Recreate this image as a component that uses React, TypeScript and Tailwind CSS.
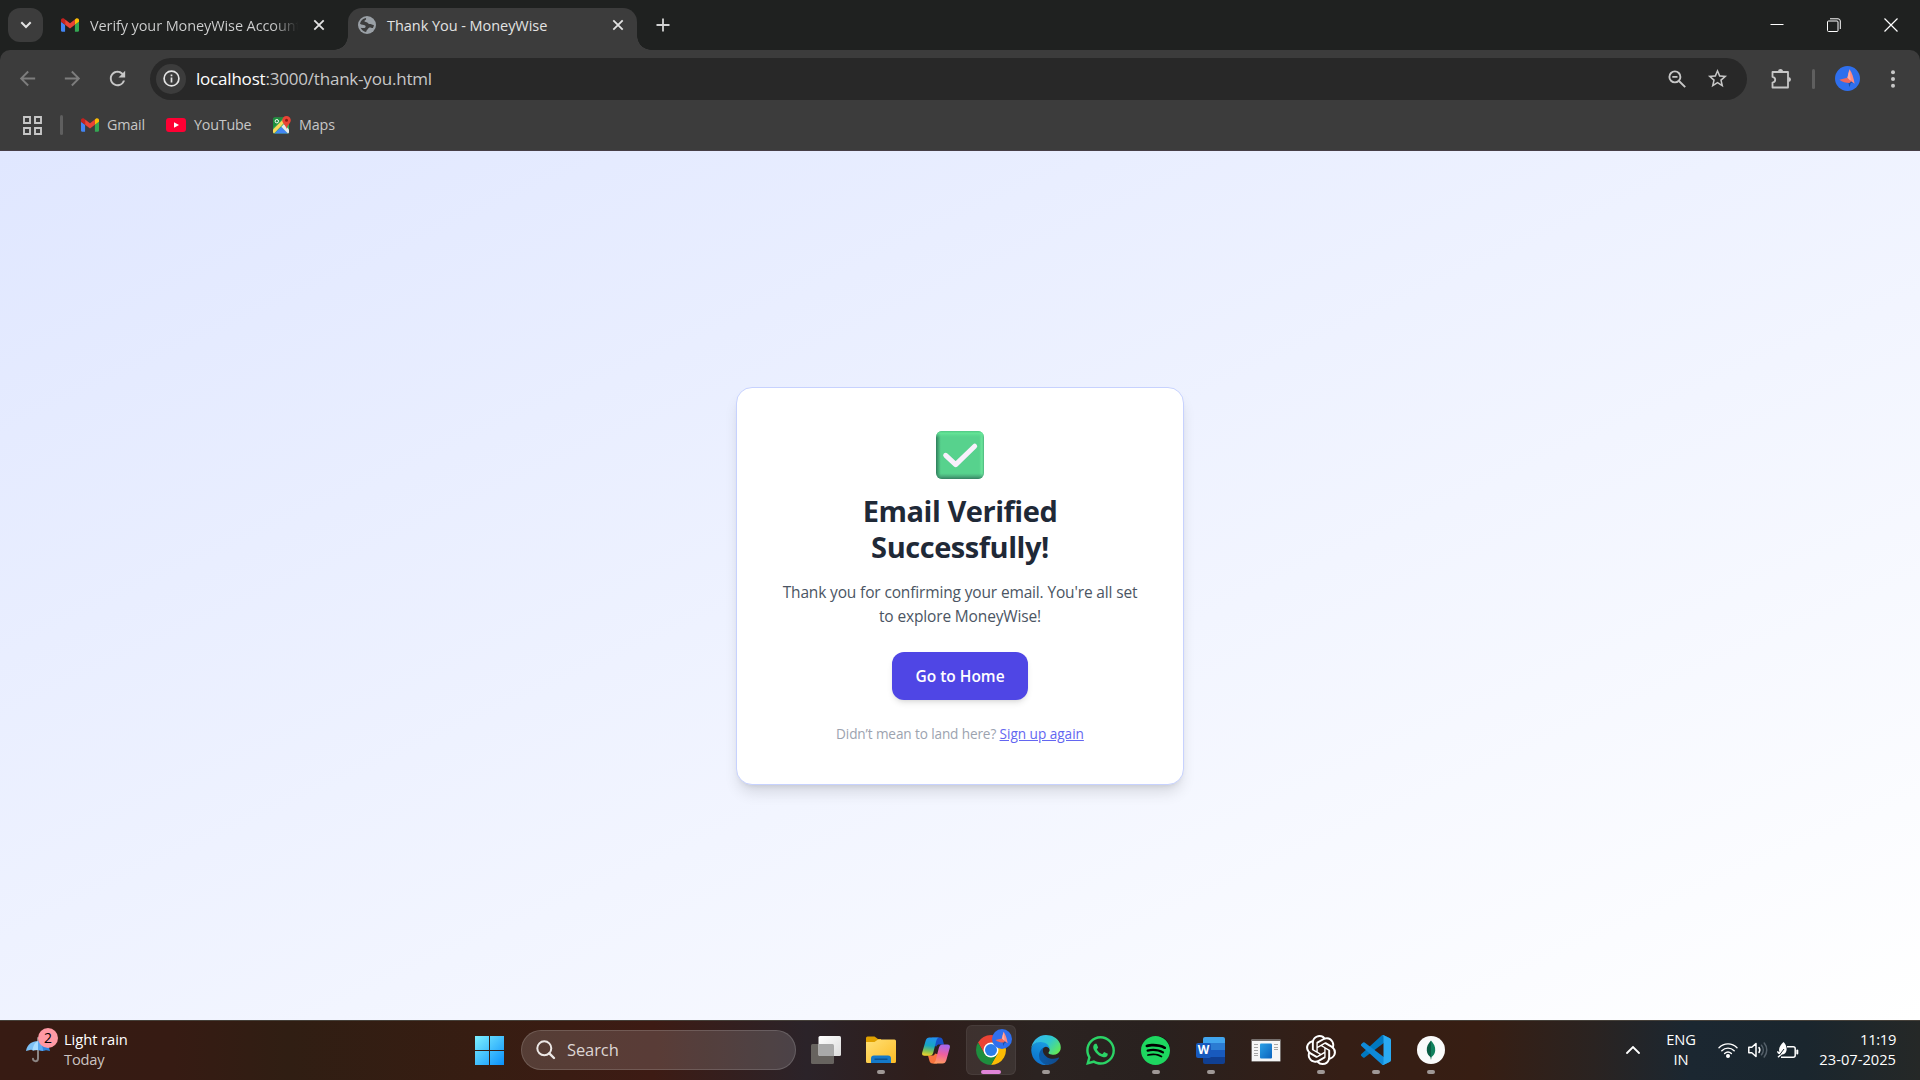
import type { ReactNode } from "react";
import { MdArrowBack, MdArrowForward, MdRefresh, MdStarBorder } from "react-icons/md";
import { SiOpenai, SiSpotify } from "react-icons/si";
import { FaWhatsapp } from "react-icons/fa";

function GmailIcon() {
  return (
    <svg viewBox="52 42 88 66" className="h-[14px] w-[18px] shrink-0">
      <path fill="#4285f4" d="M58 108h14V74L52 59v43c0 3.32 2.69 6 6 6" />
      <path fill="#34a853" d="M120 108h14c3.32 0 6-2.69 6-6V59l-20 15" />
      <path fill="#fbbc04" d="M120 48v26l20-15v-8c0-7.42-8.47-11.65-14.4-7.2" />
      <path fill="#ea4335" d="M72 74V48l24 18 24-18v26L96 92" />
      <path fill="#c5221f" d="M52 51v8l20 15V48l-5.6-4.2c-5.94-4.45-14.4-.22-14.4 7.2" />
    </svg>
  );
}

function GlobeIcon() {
  return (
    <svg viewBox="0 0 18 18" className="size-[18px] shrink-0">
      <circle cx="9" cy="9" r="9" fill="#9aa0a6" />
      <path
        fill="#3c3c3c"
        d="M2 7.8C2.5 5 4.8 2.7 7.7 2.1c.8.7.4 1.7-.5 2.2-.9.4-.9 1.2-.2 1.5 1.2.5 2.2.3 2.8 1.3.6 1 1.7 1 2.7 1 1.2 0 1.6 1 3.4.8-.1 1.2-.5 2.3-1 3.2-1.6.1-2.1-.9-3.4-.6-1.3.4-1.3 1.6-2.3 2.2-.7.5-.6 1.500-1.200 2.200A7 7 0 0 1 2.600 11.700c1.400.3 2.700.6 4 .2 1.200-.4 1.400-1.700.5-2.400C5.700 8.400 3.700 9.200 2 7.800Z"
      />
    </svg>
  );
}

function CloseIcon() {
  return (
    <svg viewBox="0 0 12 12" className="size-3 shrink-0" stroke="#e3e3e3" strokeWidth="1.8">
      <path d="M1.3 1.3l9.400 9.400M10.700 1.300L1.300 10.700" />
    </svg>
  );
}

function Bird({ className }: { className: string }) {
  return (
    <svg viewBox="0 0 26 26" className={className}>
      <circle cx="13" cy="13" r="13" fill="#2f6fed" />
      <path fill="#174ea6" d="M6 15l8 2.500 1 4.500 1.500-4.500 2.500.5-4-4z" />
      <path fill="#ff8a80" d="M15.200 3.500c2.600 4 4 8.600 5.200 15l-5.600-4.100-1.700-2.200c.4-3 1-6 2.100-8.700z" />
      <path fill="#ee675c" d="M4.500 14.200l8.400-2 4.400 3.400-2.200 2c-3.400.1-7.400-1.100-10.600-3.400z" />
      <path fill="#ffab9f" d="M15.200 3.500l-2.300 8.800 3.400 3.200z" />
    </svg>
  );
}

function TabStrip() {
  return (
    <div className="flex h-[50px] shrink-0 items-center bg-[#1f2120] text-[14.5px]">
      <div className="ml-2 flex h-[34px] w-[35px] shrink-0 items-center justify-center rounded-xl bg-[#3c3c3c]">
        <svg viewBox="0 0 12 8" className="h-2 w-3" fill="none" stroke="#e3e3e3" strokeWidth="2">
          <path d="M1.300 1.300L6 6l4.700-4.700" />
        </svg>
      </div>
      <div className="ml-[18px] flex w-[264px] shrink-0 items-center">
        <GmailIcon />
        <span className="ml-[11px] w-[211px] overflow-hidden whitespace-nowrap bg-gradient-to-r from-[#d0d1d1] from-88% to-transparent bg-clip-text pt-px tracking-[-0.1px] text-transparent">
          Verify your MoneyWise Account
        </span>
        <span className="ml-[15px]">
          <CloseIcon />
        </span>
      </div>
      <div className="relative ml-[23px] mt-2 flex h-[42px] w-[289px] shrink-0 items-center self-start rounded-t-[14px] bg-[#3c3c3c] pb-2">
        <div className="absolute -left-[14px] bottom-0 size-[14px] bg-[radial-gradient(circle_at_0_0,transparent_13.5px,#3c3c3c_14px)]" />
        <div className="absolute -right-[14px] bottom-0 size-[14px] bg-[radial-gradient(circle_at_100%_0,transparent_13.5px,#3c3c3c_14px)]" />
        <span className="ml-[10px]">
          <GlobeIcon />
        </span>
        <span className="ml-[11px] w-[225px] whitespace-nowrap pt-px tracking-[-0.05px] text-[#e3e3e3]">Thank You - MoneyWise</span>
        <span>
          <CloseIcon />
        </span>
      </div>
      <svg viewBox="0 0 14 14" className="ml-[19px] size-[14px]" stroke="#d2d3d3" strokeWidth="1.8">
        <path d="M7 .5v13M.5 7h13" />
      </svg>
      <div className="ml-auto mr-[22px] flex items-center gap-[43px] pb-px">
        <svg viewBox="0 0 14 14" className="size-[14px]" stroke="#fff">
          <path d="M.5 6.500h13" />
        </svg>
        <svg viewBox="0 0 14 14" className="size-[14px]" fill="none" stroke="#fff">
          <rect x=".5" y="3" width="10.500" height="10.500" rx="1" />
          <path d="M3 .8h8A2.300 2.300 0 0 1 13.300 3v8" />
        </svg>
        <svg viewBox="0 0 14 14" className="size-[14px]" stroke="#fff" strokeWidth="1.2">
          <path d="M.5.5l13 13M13.500.5l-13 13" />
        </svg>
      </div>
    </div>
  );
}

function Toolbar() {
  return (
    <div className="bg-[#1f2120]">
      <div className="flex h-[57px] items-center rounded-t-[10px] bg-[#3c3c3c]">
        <MdArrowBack className="ml-4 size-[23px] shrink-0 text-[#7d7d7d]" />
        <MdArrowForward className="ml-[22px] size-[23px] shrink-0 text-[#7d7d7d]" />
        <MdRefresh className="ml-[22px] size-[23px] shrink-0 text-[#c7c7c7]" />
        <div className="ml-[21px] flex h-[42px] w-[1597px] shrink-0 items-center rounded-full bg-[#282828]">
          <div className="ml-[6px] flex size-[30px] shrink-0 items-center justify-center rounded-full bg-[#3c3c3c]">
            <svg viewBox="0 0 17 17" className="size-[17px]" fill="none" stroke="#e3e3e3" strokeWidth="1.7">
              <circle cx="8.500" cy="8.500" r="7.400" />
              <path d="M8.500 7.500v5M8.500 4.500v1.800" />
            </svg>
          </div>
          <span className="ml-[10px] whitespace-nowrap pt-px text-[17px] tracking-[-0.2px] text-[#c7c7c7]">
            <span className="text-white">localhost</span>:3000/thank-you.html
          </span>
          <svg viewBox="0 0 18 18" className="ml-auto size-[18px]" fill="none" stroke="#c7c7c7" strokeWidth="1.9">
            <circle cx="6.900" cy="6.900" r="5.500" />
            <path d="M11 11l6.200 6.200M4.300 6.900h5.200" />
          </svg>
          <MdStarBorder className="ml-5 mr-[18px] size-[23px] text-[#c7c7c7]" />
        </div>
        <svg viewBox="0 0 22 22" className="ml-[23px] size-[22px]" fill="none" stroke="#c7c7c7" strokeWidth="1.8" strokeLinejoin="round">
          <path d="M3 4h15v15.500H2.500V14.600c3.600-.5 3.600-5.200 0-5.700V4Z" />
          <path fill="#c7c7c7" stroke="none" d="M8 3.500a2.500 2.500 0 0 1 5 0ZM18.500 9a2.500 2.500 0 0 1 0 5Z" />
        </svg>
        <div className="ml-5 h-5 w-[3px] rounded-full bg-[#5f5f5f]" />
        <Bird className="ml-5 size-[25px]" />
        <svg viewBox="0 0 4 18" className="ml-[31px] h-[18px] w-1" fill="#c7c7c7">
          <circle cx="2" cy="2.200" r="2" />
          <circle cx="2" cy="9" r="2" />
          <circle cx="2" cy="15.800" r="2" />
        </svg>
      </div>
      <div className="flex h-[44px] items-center border-b border-[#463e46] bg-[#3c3c3c] pb-[7px] text-[14.3px] text-[#c7c7c7]">
        <svg viewBox="0 0 19 19" className="ml-[23px] size-[19px]" fill="none" stroke="#c7c7c7" strokeWidth="1.9">
          <path d="M1 1h6v6H1zM12 1h6v6h-6zM1 12h6v6H1zM12 12h6v6h-6z" />
        </svg>
        <div className="ml-[18px] h-5 w-[3px] rounded-full bg-[#5f5f5f]" />
        <span className="ml-[18px] flex w-[85px] items-center gap-2 tracking-[-0.2px]">
          <GmailIcon />
          Gmail
        </span>
        <span className="flex w-[107px] items-center gap-2 tracking-[-0.2px]">
          <svg viewBox="0 0 20 14" className="h-[14px] w-5">
            <rect width="20" height="14" rx="3" fill="#f03" />
            <path fill="#fff" d="M8 4.200v5.600L13 7z" />
          </svg>
          YouTube
        </span>
        <span className="flex items-center gap-2 tracking-[-0.1px]">
          <svg viewBox="0 0 18 18" className="size-[18px] overflow-visible">
            <rect x="0" y="1.500" width="16" height="16" rx="1.500" fill="#34a853" />
            <path fill="#1e8e3e" d="M0 3a1.500 1.500 0 0 1 1.500-1.500H11L0 12z" />
            <path fill="#4285f4" d="M1.500 17.500L8.300 10.800l6.700 6.700z" />
            <path fill="#fbd75b" d="M0 13.500L10.500 3v4.500L1 17.400a1.500 1.500 0 0 1-1-1.400z" />
            <path fill="#e8eaed" d="M8.300 10.800L11 8l5 5.500v2.700a1.500 1.500 0 0 1-1 1.300z" />
            <circle cx="3.800" cy="5.200" r="1.700" fill="none" stroke="#fff" />
            <path fill="#ea4335" d="M13.500 0a4.300 4.300 0 0 1 4.300 4.300c0 3.200-3.600 4.500-4.300 8.700-.7-4.200-4.300-5.500-4.300-8.700A4.300 4.300 0 0 1 13.500 0z" />
            <circle cx="13.500" cy="4.300" r="1.500" fill="#8c1c13" />
          </svg>
          Maps
        </span>
      </div>
    </div>
  );
}

function ThankYouCard() {
  return (
    <div className="mt-px flex h-[398px] w-[448px] flex-col items-center rounded-2xl border border-[#c7d2fe] bg-white pt-[43px] text-center shadow-[0_10px_15px_-3px_rgba(0,0,0,0.12),0_4px_6px_-4px_rgba(0,0,0,0.12)]">
      <svg viewBox="0 0 48 48" className="size-12 shrink-0">
        <defs>
          <linearGradient id="sideShade" x1="0" x2="1" y1="0" y2="0">
            <stop offset="0" stopColor="#2f7d5b" />
            <stop offset=".1" stopColor="#57d28d" />
            <stop offset=".9" stopColor="#57d28d" />
            <stop offset=".96" stopColor="#6be59b" />
            <stop offset="1" stopColor="#4cb57d" />
          </linearGradient>
          <linearGradient id="endShade" x1="0" x2="0" y1="0" y2="1">
            <stop offset="0" stopColor="#4fc783" />
            <stop offset=".05" stopColor="#66e898" stopOpacity=".8" />
            <stop offset=".15" stopColor="#57d28d" stopOpacity="0" />
            <stop offset=".88" stopColor="#459a75" stopOpacity="0" />
            <stop offset="1" stopColor="#358061" />
          </linearGradient>
        </defs>
        <rect width="48" height="48" rx="6" fill="url(#sideShade)" />
        <rect width="48" height="48" rx="6" fill="url(#endShade)" />
        <path d="M9.700 24.300l10 9.300L38.700 15.200" fill="none" stroke="#f8f0fc" strokeWidth="5" strokeLinecap="round" strokeLinejoin="round" />
      </svg>
      <h1 className="mt-[14px] w-[260px] text-[29px] font-bold leading-[36px] tracking-[-0.45px] text-[#1f2937]">
        Email Verified Successfully!
      </h1>
      <p className="mt-[15px] w-[366px] text-[15.5px] leading-6 tracking-[-0.15px] text-[#4b5563]">
        Thank you for confirming your email. You&apos;re all set to explore MoneyWise!
      </p>
      <button className="mt-6 h-12 w-[136px] shrink-0 rounded-xl bg-[#4f46e5] pt-px text-[15.5px] font-semibold text-white shadow-md">
        Go to Home
      </button>
      <p className="mt-6 whitespace-nowrap text-[13.6px] leading-5 tracking-[-0.12px] text-[#9ca3af]">
        Didn’t mean to land here? <a className="tracking-[-0.02px] text-[#6366f1] underline">Sign up again</a>
      </p>
    </div>
  );
}

function TaskIcon({ children, running = false, active = false }: { children: ReactNode; running?: boolean; active?: boolean }) {
  return (
    <div
      className={
        active
          ? "relative mx-[2.5px] flex size-[50px] shrink-0 items-center justify-center rounded-md border border-white/5 bg-white/8"
          : "relative mx-[2.5px] flex size-[50px] shrink-0 items-center justify-center"
      }
    >
      {children}
      {running && <span className="absolute bottom-px left-[21px] h-1 w-2 rounded-full bg-[#9f9896]" />}
      {active && <span className="absolute bottom-0 left-[14px] h-1 w-5 rounded-full bg-[#e085d8]" />}
    </div>
  );
}

function FolderIcon() {
  return (
    <svg viewBox="0 0 30 28" className="h-7 w-[30px]">
      <defs>
        <linearGradient id="folder" x1="0" x2="1" y1="0" y2="1">
          <stop offset="0" stopColor="#ffe076" />
          <stop offset="1" stopColor="#fcbc25" />
        </linearGradient>
      </defs>
      <path fill="#e0a100" d="M0 2a1.500 1.500 0 0 1 1.500-1.500h7L12 3h3v9H0z" />
      <path fill="url(#folder)" d="M0 6h8.500l3.500-2.500h16.500A1.500 1.500 0 0 1 30 5v20.500a1.500 1.500 0 0 1-1.500 1.500h-27A1.500 1.500 0 0 1 0 25.500z" />
      <path fill="#1479c9" d="M5 27v-4.500A3 3 0 0 1 8 19.500h14a3 3 0 0 1 3 3V27z" />
      <path stroke="#0a4c86" strokeWidth="1.300" d="M8.500 23.200h13" />
    </svg>
  );
}

function CopilotIcon() {
  return (
    <svg viewBox="0 0 28 27" className="h-[27px] w-7">
      <defs>
        <linearGradient id="cpLeft" x1=".5" x2=".35" y1="0" y2="1">
          <stop offset="0" stopColor="#2292ee" />
          <stop offset=".45" stopColor="#18a6c0" />
          <stop offset=".75" stopColor="#80c255" />
          <stop offset="1" stopColor="#f2d22b" />
        </linearGradient>
        <linearGradient id="cpRight" x1=".6" x2=".4" y1="0" y2="1">
          <stop offset="0" stopColor="#a467f0" />
          <stop offset=".5" stopColor="#ef5f9f" />
          <stop offset="1" stopColor="#ff9b61" />
        </linearGradient>
      </defs>
      <path fill="#1750c8" d="M10 .5h8c1.600 0 2.300 1 2.800 2.500L22 7.500h-5c-1.200 0-2 .5-2.500 2L12 9z" />
      <path fill="#f8743e" d="M6 18.500h4.500c1.200 0 2-.6 2.500-2l3.500 1-1.500 9h-4.500c-1.700 0-2.500-1-3-2.500z" />
      <path fill="url(#cpLeft)" d="M7.500.5H17c-1.400.4-2.200 1.500-2.700 3.200L11.300 15.500c-.6 2.300-1.700 3.300-4 3.300H2.500C.5 18.800-.3 17.500.2 15.500L3.700 3.500C4.300 1.500 5.500.5 7.500.5z" />
      <path fill="url(#cpRight)" d="M20.500 7.500h5c2 0 2.800 1.300 2.300 3.300l-3.500 12.400c-.6 2-1.800 3.300-3.800 3.300H11c1.400-.4 2.200-1.500 2.700-3.200l3-11.800c.5-2.300 1.500-4 3.800-4z" />
    </svg>
  );
}

function ChromeIcon() {
  return (
    <svg viewBox="2 2 44 44" className="size-[30px]">
      <path fill="#ea4335" d="M4.950 13A22 22 0 0 1 43.050 13H24L14.470 29.500Z" />
      <path fill="#fbbc04" d="M43.050 13A22 22 0 0 1 24 46L33.530 29.500 24 13Z" />
      <path fill="#1e8e3e" d="M24 46A22 22 0 0 1 4.950 13L14.470 29.500H33.530Z" />
      <circle cx="24" cy="24" r="11" fill="#fff" />
      <circle cx="24" cy="24" r="8.800" fill="#2b7de9" />
    </svg>
  );
}

function EdgeIcon() {
  return (
    <svg viewBox="0 0 256 260" className="size-[30px]">
      <defs>
        <linearGradient id="edgeA" x1=".2" x2="1" y1=".5" y2=".6">
          <stop offset="0" stopColor="#0c59a4" />
          <stop offset="1" stopColor="#114a8b" />
        </linearGradient>
        <linearGradient id="edgeB" x1=".6" x2=".3" y1="0" y2="1">
          <stop offset="0" stopColor="#1b9de2" />
          <stop offset=".6" stopColor="#0f7fd3" />
          <stop offset="1" stopColor="#1070cc" />
        </linearGradient>
        <linearGradient id="edgeC" x1="0" x2="1" y1=".2" y2=".8">
          <stop offset="0" stopColor="#35b5f1" />
          <stop offset=".5" stopColor="#2fc8cf" />
          <stop offset="1" stopColor="#66eb4e" />
        </linearGradient>
      </defs>
      <path fill="url(#edgeA)" d="M235.680 195.460a93.730 93.730 0 0 1-10.540 4.710 101.870 101.870 0 0 1-35.900 6.460c-47.320 0-88.540-32.550-88.540-74.320A31.480 31.480 0 0 1 117.130 105c-42.800 1.800-53.800 46.400-53.800 72.530 0 73.880 68.090 81.370 82.760 81.370 7.910 0 19.840-2.300 27-4.560l1.310-.44a128.340 128.340 0 0 0 66.600-52.800 4 4 0 0 0-5.320-5.640Z" />
      <path fill="url(#edgeB)" d="M105.730 246.600a79.200 79.200 0 0 1-22.740-21.340 80.720 80.720 0 0 1 29.530-120c3.120-1.470 8.450-4.050 15.540-4a32.350 32.350 0 0 1 25.690 13 31.880 31.880 0 0 1 6.360 18.660c0-.21 24.460-79.600-80-79.600-43.900 0-80 41.660-80 78.210a130.150 130.150 0 0 0 12.110 56 128 128 0 0 0 156.380 67.110 75.550 75.550 0 0 1-62.780-8Z" />
      <path fill="url(#edgeC)" d="M152.330 148.860c-.81 1.050-3.300 2.500-3.300 5.660 0 2.610 1.700 5.120 4.720 7.230 14.380 10 41.490 8.680 41.560 8.680a59.560 59.560 0 0 0 30.270-8.350 61.380 61.380 0 0 0 30.430-52.880c.26-22.410-8-37.310-11.340-43.910C223.480 23.840 177.740 0 128 0A128 128 0 0 0 0 126.200c.48-36.540 36.800-66.050 80-66.050 3.500 0 23.460.34 42 10.070 16.340 8.580 24.900 18.940 30.850 29.210 6.180 10.670 7.280 24.150 7.280 29.520 0 5.370-2.740 13.330-7.800 19.910Z" />
    </svg>
  );
}

function WordIcon() {
  return (
    <div className="relative h-[27px] w-[29px]">
      <div className="ml-[7px] flex h-[27px] w-[22px] flex-col overflow-hidden rounded-[2px]">
        <span className="flex-1 bg-[#41a5ee]" />
        <span className="flex-1 bg-[#2b7cd3]" />
        <span className="flex-1 bg-[#185abd]" />
        <span className="flex-1 bg-[#103f91]" />
      </div>
      <span className="absolute left-0 top-[6px] flex size-[15px] items-center justify-center rounded-[2px] bg-[#185abd] text-[12px] font-bold leading-none text-white">
        W
      </span>
    </div>
  );
}

function WindowAppIcon() {
  return (
    <svg viewBox="0 0 30 23" className="h-[23px] w-[30px]">
      <defs>
        <linearGradient id="panel" x1="0" x2="1" y1="0" y2="1">
          <stop offset="0" stopColor="#2aa0e6" />
          <stop offset="1" stopColor="#0c63bd" />
        </linearGradient>
      </defs>
      <rect x=".5" y=".5" width="29" height="22" rx="1" fill="#f6f6f6" stroke="#77716e" />
      <path stroke="#77716e" strokeWidth="1.600" d="M.5 1.200h29" />
      <path stroke="#a6a6a6" d="M3 5.500h4M3 8.500h4M3 11.500h4M3 14.500h4M3 16.500h4M23 5.500h4M23 8.500h4M23 10.500h4" />
      <rect x="9" y="4.500" width="12" height="15" rx="1" fill="url(#panel)" />
    </svg>
  );
}

function VsCodeIcon() {
  return (
    <svg viewBox="0 0 100 100" className="size-[30px]">
      <path fill="#0078c0" d="M96.460 10.800L75.860.88a6.230 6.230 0 0 0-7.110 1.200L1.300 63.580a4.170 4.170 0 0 0 0 6.170l5.510 5a4.170 4.170 0 0 0 5.320.24L93.360 13.400c2.730-2.060 6.640-.12 6.640 3.300v-.24a6.250 6.250 0 0 0-3.540-5.630z" />
      <path fill="#0f8ad8" d="M96.460 89.170l-20.600 9.920a6.230 6.230 0 0 1-7.110-1.210L1.300 36.420a4.170 4.170 0 0 1 0-6.170l5.510-5a4.170 4.170 0 0 1 5.320-.24l81.230 61.600c2.730 2.070 6.640.13 6.640-3.290v.24a6.250 6.250 0 0 1-3.540 5.630z" />
      <path fill="#2aaaf2" d="M75.860 99.130a6.230 6.230 0 0 1-7.110-1.210c2.300 2.300 6.250.67 6.250-2.590V4.670c0-3.260-3.950-4.900-6.250-2.590a6.230 6.230 0 0 1 7.110-1.200l20.600 9.900A6.250 6.250 0 0 1 100 16.400v67.200c0 2.400-1.370 4.600-3.540 5.630z" />
    </svg>
  );
}

function Taskbar() {
  return (
    <div className="flex h-[60px] shrink-0 items-center border-t border-[#454039] bg-[linear-gradient(90deg,#371b13_0%,#361b13_9%,#301e13_15%,#371d12_25%,#3d1b14_34%,#2b2329_42%,#2f1e1b_48%,#2b2321_54%,#29211f_60%,#351e15_70%,#371e13_77%,#2a2321_83%,#1b2731_88%,#1a262e_94%,#252827_100%)] pb-px text-[14.7px] text-white">
      <div className="flex w-[461px] shrink-0 items-center">
        <div className="relative ml-[26px] h-[40px] w-[34px]">
          <svg viewBox="0 0 24 28" className="absolute left-0 top-[6px] h-7 w-6">
            <path fill="none" stroke="#8b8583" strokeWidth="2" strokeLinecap="round" d="M12 2v20.500c0 3.500-5 3.500-5 .3" />
            <path fill="#7cc0f5" d="M0 15C1 8.500 6 5 12 5l-4 9.500-3-.8z" />
            <path fill="#a9dcff" d="M12 5C8.500 6.500 7 10 6.500 14.500L12 14z" />
            <path fill="#2f86e0" d="M12 5c6 0 11 3.500 12 10l-4-.7-3 .7-5-1z" />
            <path fill="#5ba9f0" d="M12 5c3.500 2 5 6 5 10l-5-1z" />
          </svg>
          <span className="absolute left-[12px] -top-[2px] flex size-5 items-center justify-center rounded-full bg-[#ff99a4] text-[14px] leading-none text-black">2</span>
        </div>
        <div className="ml-[4px] pb-[3px] leading-5">
          <div className="tracking-[-0.05px]">Light rain</div>
          <div className="tracking-[-0.2px] text-[#cbc3c1]">Today</div>
        </div>
      </div>
      <svg viewBox="0 0 29 29" className="ml-[14px] size-[29px] shrink-0">
        <defs>
          <linearGradient id="win" gradientUnits="userSpaceOnUse" x1="0" x2="29" y1="0" y2="29">
            <stop offset="0" stopColor="#7df0ff" />
            <stop offset="1" stopColor="#0a90fb" />
          </linearGradient>
        </defs>
        <path fill="url(#win)" d="M0 0h14v14H0zM15 0h14v14H15zM0 15h14v14H0zM15 15h14v14H15z" />
      </svg>
      <div className="ml-[17px] flex h-10 w-[275px] shrink-0 items-center rounded-full border border-white/15 bg-white/15 text-[16.5px] text-[#ddd6d4]">
        <svg viewBox="0 0 20 20" className="ml-[14px] size-5" fill="none" stroke="#ece8e6" strokeWidth="2" strokeLinecap="round">
          <circle cx="8.300" cy="8.300" r="7" />
          <path d="M13.300 13.300l4.700 4.700" strokeWidth="2.4" />
        </svg>
        <span className="ml-[11px] pt-px tracking-[-0.1px]">Search</span>
      </div>
      <div className="ml-[2px] flex items-center">
        <TaskIcon>
          <svg viewBox="0 0 30 28" className="h-7 w-[30px]">
            <defs>
              <linearGradient id="tvFront" x1="0" x2="1" y1="0" y2="1">
                <stop offset="0" stopColor="#fff" />
                <stop offset="1" stopColor="#dcdcdc" />
              </linearGradient>
            </defs>
            <rect y="8" width="23" height="20" rx="1.500" fill="#67635f" />
            <rect x="7.500" width="22.500" height="20" rx="1.500" fill="url(#tvFront)" />
            <path fill="#a9a9a9" d="M7.500 8H21.500A1.500 1.500 0 0 1 23 9.500V20H9a1.500 1.500 0 0 1-1.500-1.500z" />
          </svg>
        </TaskIcon>
        <TaskIcon running>
          <FolderIcon />
        </TaskIcon>
        <TaskIcon>
          <CopilotIcon />
        </TaskIcon>
        <TaskIcon active>
          <ChromeIcon />
          <Bird className="absolute right-[3px] top-[3px] size-5" />
        </TaskIcon>
        <TaskIcon running>
          <EdgeIcon />
        </TaskIcon>
        <TaskIcon>
          <FaWhatsapp className="size-[33px] text-[#2bd366]" />
        </TaskIcon>
        <TaskIcon running>
          <span className="flex size-7 items-center justify-center rounded-full bg-black">
            <SiSpotify className="size-[29px] shrink-0 text-[#1ed760]" />
          </span>
        </TaskIcon>
        <TaskIcon running>
          <WordIcon />
        </TaskIcon>
        <TaskIcon>
          <WindowAppIcon />
        </TaskIcon>
        <TaskIcon running>
          <SiOpenai className="size-[30px]" />
        </TaskIcon>
        <TaskIcon running>
          <VsCodeIcon />
        </TaskIcon>
        <TaskIcon running>
          <svg viewBox="0 0 28 28" className="size-7">
            <circle cx="14" cy="14" r="14" fill="#fafafa" />
            <path fill="#10805c" d="M14 4.500c3 3.500 4.500 6 4.200 10.200-.3 3.300-2.200 5.300-3.600 6.300L14 24z" />
            <path fill="#0a5c43" d="M14 4.500c-3 3.500-4.500 6-4.200 10.200.3 3.300 2.200 5.300 3.600 6.300L14 24z" />
          </svg>
        </TaskIcon>
      </div>
      <div className="ml-auto mr-6 flex items-center">
        <svg viewBox="0 0 14 8" className="mr-[26px] h-2 w-[14px]" fill="none" stroke="#fff" strokeWidth="1.8" strokeLinecap="round">
          <path d="M1 7l6-6 6 6" />
        </svg>
        <div className="pb-[2px] w-[30px] text-center leading-5 tracking-[-0.2px]">
          ENG
          <br />
          IN
        </div>
        <svg viewBox="0 0 20 16" className="ml-[22px] h-4 w-5" fill="none" stroke="#fff" strokeWidth="1.4" strokeLinecap="round">
          <path d="M1 5.800c5-5.200 13-5.200 18 0M3.800 8.800c3.500-3.600 8.900-3.600 12.400 0M6.600 11.600c2-2 4.800-2 6.800 0" />
          <circle cx="10" cy="14" r="1.300" fill="#fff" />
        </svg>
        <svg viewBox="0 0 20 16" className="ml-[10px] h-4 w-5" fill="none" stroke="#fff" strokeWidth="1.5" strokeLinejoin="round" strokeLinecap="round">
          <path d="M.8 5.200h3L8 1.500v13l-4.200-3.700h-3z" />
          <path d="M11 5.500c1 1.500 1 3.500 0 5" />
          <path stroke="#55606a" d="M13.500 3.200c2.300 2.800 2.300 6.800 0 9.600M16.200 1c3.400 4 3.400 10 0 14" />
        </svg>
        <svg viewBox="0 0 22 17" className="ml-[9px] h-[17px] w-[22px]" fill="none" stroke="#fff" strokeWidth="1.5">
          <path d="M10 4.800h6.200a2 2 0 0 1 2 2v6.400a2 2 0 0 1-2 2H4" />
          <path strokeWidth="2" strokeLinecap="round" d="M20.300 8.500v3" />
          <path fill="#fff" stroke="none" d="M6.500 0C9 2.500 10 5.500 9.500 8.500c-.5 2.600-2.300 4-4.500 4l-3.500 3.200-1-1L3 12.500c-2-.5-3-1.500-3-3.500l2.500 1C1 6.500 3.500 3 6.500 0z" />
          <path strokeWidth="1" stroke="#1a262e" d="M2.500 13L7 7" />
        </svg>
        <div className="ml-[19px] w-[78px] pb-[3px] text-right leading-5">
          <div className="tracking-[-0.3px]">11:19</div>
          <div>23-07-2025</div>
        </div>
      </div>
    </div>
  );
}

export default function App() {
  return (
    <div className="flex h-[1080px] w-[1920px] flex-col overflow-hidden font-['Open_Sans',sans-serif]">
      <TabStrip />
      <Toolbar />
      <main className="flex flex-1 items-center justify-center bg-gradient-to-br from-[#e0e7ff] to-white">
        <ThankYouCard />
      </main>
      <Taskbar />
    </div>
  );
}
